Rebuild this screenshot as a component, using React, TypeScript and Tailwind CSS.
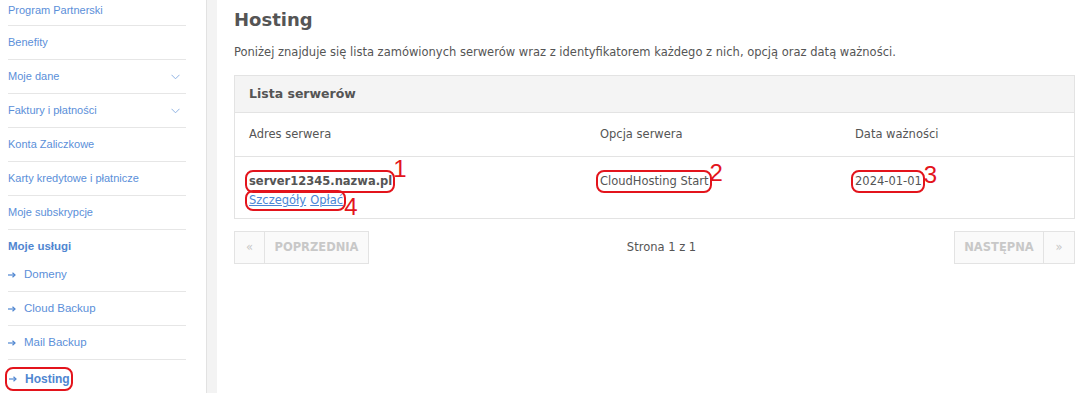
import React from "react";

const sideFont = { fontFamily: '"Liberation Sans", Arial, sans-serif' };
const mainFont = { fontFamily: '"DejaVu Sans", Verdana, sans-serif' };

function Mark({ children, n, className = "", numClass = "" }: { children: React.ReactNode; n?: string; className?: string; numClass?: string }) {
  return (
    <span className={"relative inline-block " + className}>
      {children}
      <span className="pointer-events-none absolute -left-[4px] -right-[3px] -top-[3px] -bottom-[3px] rounded-[8px] border-2 border-[#e3141c]" />
      {n && (
        <span
          className={"absolute left-full text-[24px] leading-none text-[#e3141c] " + numClass}
          style={{ fontFamily: '"Liberation Sans", Arial, sans-serif' }}
        >
          {n}
        </span>
      )}
    </span>
  );
}

function Chevron() {
  return (
    <svg width="9" height="6" viewBox="0 0 9 6" className="mr-[6px]">
      <path d="M0.5 0.8 L4.5 4.8 L8.5 0.8" fill="none" stroke="#8fb3e3" strokeWidth="1" />
    </svg>
  );
}

function Arrow() {
  return (
    <svg width="8" height="6" viewBox="0 0 8 6" className="mr-[8px]">
      <path d="M0 3 H6.5" stroke="#4f86d1" strokeWidth="1.2" />
      <path d="M4.5 0.8 L7 3 L4.5 5.2" fill="none" stroke="#4f86d1" strokeWidth="1.2" />
    </svg>
  );
}

function SideItem({ label, chevron, first }: { label: string; chevron?: boolean; first?: boolean }) {
  return (
    <div
      className={
        "flex justify-between border-b border-[#e6e6e6] text-[11px] text-[#5b8fd9] " +
        (first ? "h-[26px] items-start" : "h-[34px] items-center")
      }
    >
      <span className={first ? "mt-[2px]" : ""}>{label}</span>
      {chevron && <Chevron />}
    </div>
  );
}

function SubItem({ label, last, active }: { label: string; last?: boolean; active?: boolean }) {
  return (
    <div className={"flex h-[34px] items-center text-[11px] " + (last ? "pt-[4px]" : "border-b border-[#e6e6e6]")}>
      {active ? (
        <Mark className="ml-[1px]">
          <span className="flex items-center">
            <Arrow />
            <span className="text-[12px] font-bold text-[#4f86d1]">{label}</span>
          </span>
        </Mark>
      ) : (
        <span className="flex items-center text-[#5b8fd9]">
          <Arrow />
          <span className="text-[11.5px]">{label}</span>
        </span>
      )}
    </div>
  );
}

export default function App() {
  return (
    <div className="flex h-[393px] w-[1077px] overflow-hidden bg-white">
      <aside className="w-[206px] shrink-0 pl-[8px] pr-[20px]" style={sideFont}>
        <SideItem label="Program Partnerski" first />
        <SideItem label="Benefity" />
        <SideItem label="Moje dane" chevron />
        <SideItem label="Faktury i płatności" chevron />
        <SideItem label="Konta Zaliczkowe" />
        <SideItem label="Karty kredytowe i płatnicze" />
        <SideItem label="Moje subskrypcje" />
        <div className="flex h-[28px] items-end pb-[3px] text-[11.5px] font-bold text-[#4f86d1]">Moje usługi</div>
        <SubItem label="Domeny" />
        <SubItem label="Cloud Backup" />
        <SubItem label="Mail Backup" />
        <SubItem label="Hosting" last active />
      </aside>
      <div className="w-[11px] shrink-0 border-l border-[#e2e2e2] bg-[#f3f3f3]" />
      <main className="flex-1 pl-[17px] pr-[2px] text-[#555]" style={mainFont}>
        <h1 className="mt-[8px] text-[18px] font-bold leading-[24px] text-[#555]">Hosting</h1>
        <p className="mt-[12px] text-[11.5px] leading-[16px]">
          Poniżej znajduje się lista zamówionych serwerów wraz z identyfikatorem każdego z nich, opcją oraz datą ważności.
        </p>
        <section className="mt-[15px] border border-[#e3e3e3]">
          <div className="flex h-[37px] items-center border-b border-[#e3e3e3] bg-[#f4f4f4] pl-[14px] text-[12.5px] font-bold text-[#555]">
            Lista serwerów
          </div>
          <div className="grid h-[44px] grid-cols-[351px_255px_1fr] items-center border-b border-[#e3e3e3] pl-[14px] text-[11.5px]">
            <span>Adres serwera</span>
            <span>Opcja serwera</span>
            <span>Data ważności</span>
          </div>
          <div className="grid h-[61px] grid-cols-[351px_255px_1fr] items-start pl-[14px] pt-[16px] text-[11.5px]">
            <div className="flex flex-col items-start">
              <Mark n="1" numClass="-top-[16px] ml-[1px]">
                <span className="font-bold leading-[15px]">server12345.nazwa.pl</span>
              </Mark>
              <Mark n="4" numClass="top-[2px] ml-[1px]" className="mt-[3px]">
                <span className="flex gap-[4px] leading-[15px] text-[#4a86d6]">
                  <span className="underline">Szczegóły</span>
                  <span className="underline">Opłać</span>
                </span>
              </Mark>
            </div>
            <div>
              <Mark n="2" numClass="-top-[12px] ml-[1px]">
                <span className="leading-[15px]">CloudHosting Start</span>
              </Mark>
            </div>
            <div>
              <Mark n="3" numClass="-top-[10px] ml-[2px]">
                <span className="leading-[15px]">2024-01-01</span>
              </Mark>
            </div>
          </div>
        </section>
        <nav className="mt-[12px] flex items-center justify-between">
          <div className="flex h-[33px] border border-[#e3e3e3] bg-[#fafafa] text-[11.5px] font-bold text-[#c8c8c8]">
            <span className="flex w-[30px] items-center justify-center border-r border-[#e3e3e3] font-normal">«</span>
            <span className="flex w-[103px] items-center justify-center">POPRZEDNIA</span>
          </div>
          <span className="text-[11.5px] text-[#555]">Strona 1 z 1</span>
          <div className="flex h-[33px] border border-[#e3e3e3] bg-[#fafafa] text-[11.5px] font-bold text-[#c8c8c8]">
            <span className="flex w-[89px] items-center justify-center border-r border-[#e3e3e3]">NASTĘPNA</span>
            <span className="flex w-[30px] items-center justify-center font-normal">»</span>
          </div>
        </nav>
      </main>
    </div>
  );
}
